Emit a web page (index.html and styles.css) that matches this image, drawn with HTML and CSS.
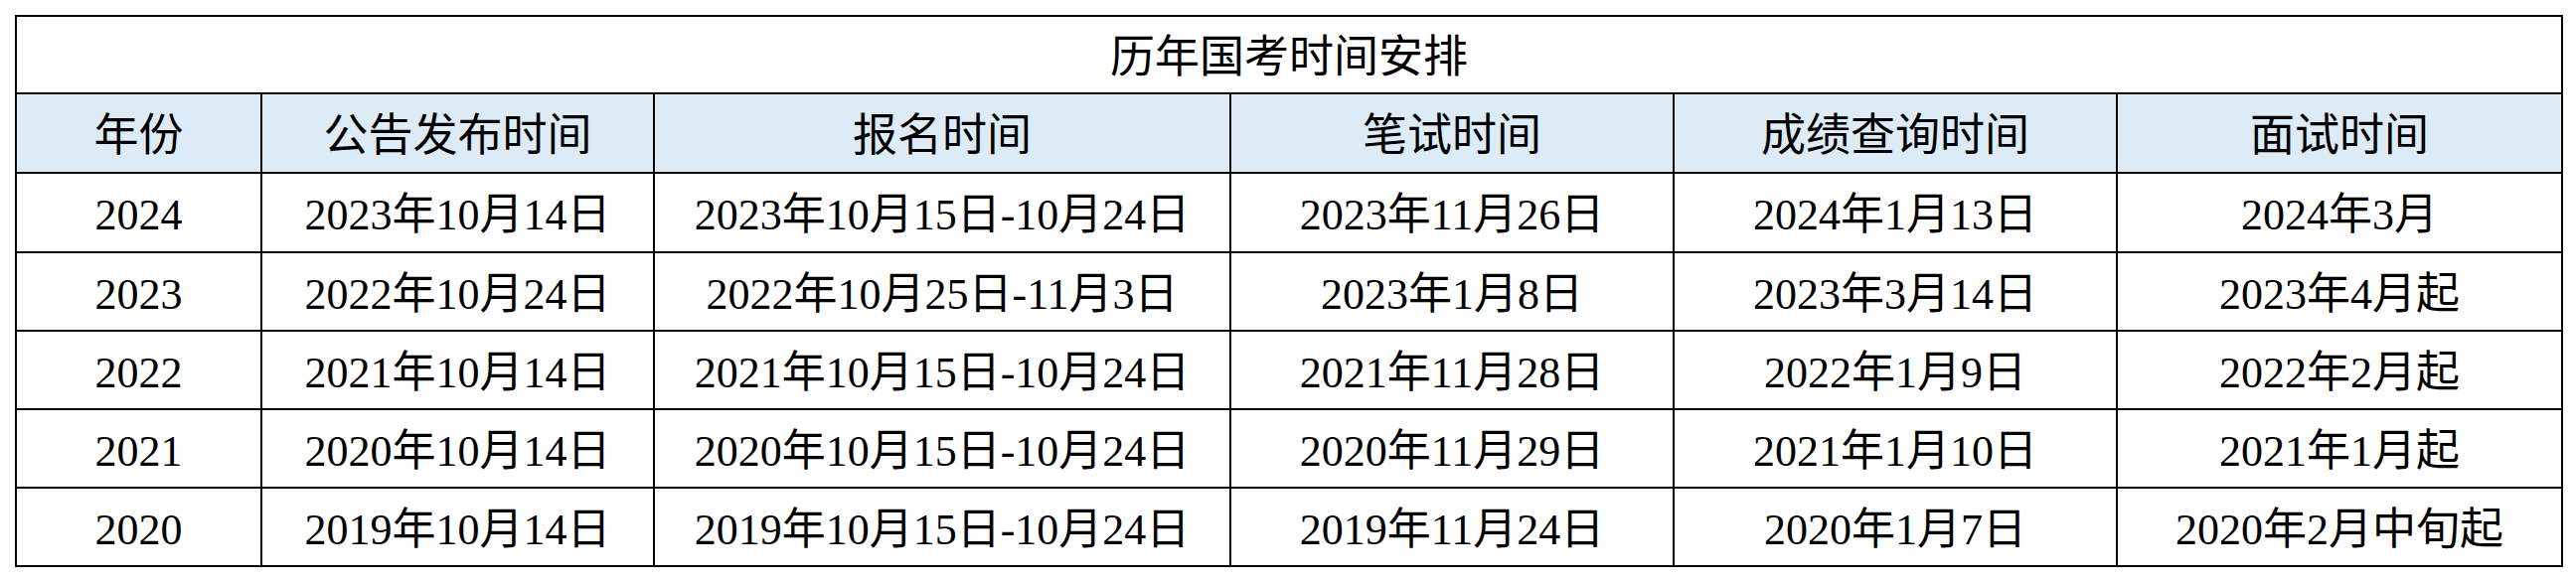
FILE: index.html
```html
<!DOCTYPE html>
<html lang="zh-CN">
<head>
<meta charset="utf-8">
<title>历年国考时间安排</title>
<link rel="stylesheet" href="styles.css">
</head>
<body>
<div class="page">
<table class="sched">
<colgroup>
<col class="c1"><col class="c2"><col class="c3"><col class="c4"><col class="c5"><col class="c6">
</colgroup>
<thead>
<tr class="title-row"><th colspan="6" class="title">历年国考时间安排</th></tr>
<tr class="head-row">
<th>年份</th><th>公告发布时间</th><th>报名时间</th><th>笔试时间</th><th>成绩查询时间</th><th>面试时间</th>
</tr>
</thead>
<tbody>
<tr class="r80"><td>2024</td><td>2023年10月14日</td><td>2023年10月15日-10月24日</td><td>2023年11月26日</td><td>2024年1月13日</td><td>2024年3月</td></tr>
<tr class="r79"><td>2023</td><td>2022年10月24日</td><td>2022年10月25日-11月3日</td><td>2023年1月8日</td><td>2023年3月14日</td><td>2023年4月起</td></tr>
<tr class="r79"><td>2022</td><td>2021年10月14日</td><td>2021年10月15日-10月24日</td><td>2021年11月28日</td><td>2022年1月9日</td><td>2022年2月起</td></tr>
<tr class="r79"><td>2021</td><td>2020年10月14日</td><td>2020年10月15日-10月24日</td><td>2020年11月29日</td><td>2021年1月10日</td><td>2021年1月起</td></tr>
<tr class="r79"><td>2020</td><td>2019年10月14日</td><td>2019年10月15日-10月24日</td><td>2019年11月24日</td><td>2020年1月7日</td><td>2020年2月中旬起</td></tr>
</tbody>
</table>
</div>
</body>
</html>
```
FILE: styles.css
```css
html, body {
  margin: 0;
  padding: 0;
  background: #ffffff;
}
.page {
  padding: 15px 0 0 15px;
}
.sched {
  border-collapse: collapse;
  table-layout: fixed;
  width: 2562px;
  font-family: "Liberation Serif", "Noto Sans CJK SC", serif;
  color: #000;
  border: 2px solid #000;
}
.c1 { width: 247px; }
.c2 { width: 395px; }
.c3 { width: 580px; }
.c4 { width: 446px; }
.c5 { width: 446px; }
.c6 { width: 448px; }
.sched th,
.sched td {
  border: 2px solid #000;
  padding: 6px 0 0 0;
  text-align: center;
  vertical-align: middle;
  font-weight: 400;
  white-space: nowrap;
  line-height: 1;
}
.sched td {
  font-size: 44px;
}
.sched th {
  font-size: 45px;
}
.title-row { height: 78px; }
.head-row { height: 80px; }
.head-row th { background: #ddebf7; }
.r80 { height: 80px; }
.r79 { height: 79px; }
```
